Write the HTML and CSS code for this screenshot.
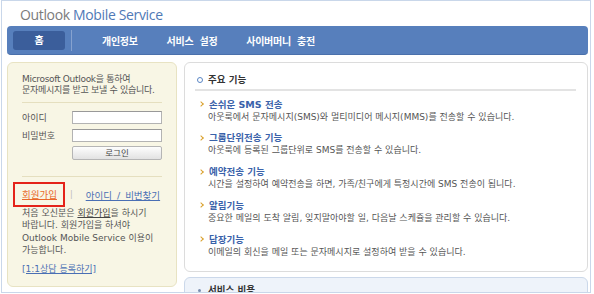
FILE: index.html
```html
<!DOCTYPE html>
<html lang="ko">
<head>
    <meta charset="UTF-8">
    <title>Outlook Mobile Service</title>
    <link rel="stylesheet" href="styles.css">
</head>
<body>
    <div class="frame">
        <div class="header">
            <span class="logo-gray">Outlook</span> <span class="logo-blue">Mobile Service</span>
        </div>

        <nav class="gnb">
            <a class="gnb-home">홈</a>
            <span class="gnb-sep"></span>
            <ul class="gnb-menu">
                <li>개인정보</li>
                <li>서비스 설정</li>
                <li>사이버머니 충전</li>
            </ul>
        </nav>

        <div class="content">
            <div class="login-box">
                <p class="login-intro">Microsoft Outlook을 통하여<br>문자메시지를 받고 보낼 수 있습니다.</p>

                <div class="login-form">
                    <div class="form-row">
                        <label>아이디</label>
                        <input type="text">
                    </div>
                    <div class="form-row">
                        <label>비밀번호</label>
                        <input type="password">
                    </div>
                    <div class="form-row">
                        <label></label>
                        <button class="login-btn">로그인</button>
                    </div>
                </div>

                <div class="login-links">
                    <span class="join-box"><a class="join-link">회원가입</a></span>
                    <span class="bar">|</span>
                    <a class="find-link">아이디 / 비번찾기</a>
                </div>

                <p class="login-note">처음 오신분은 <u>회원가입</u>을 하시기<br>바랍니다. 회원가입을 하셔야<br>Outlook Mobile Service 이용이<br>가능합니다.</p>

                <a class="qna-link">[1:1상담 등록하기]</a>
            </div>

            <div class="main-col">
                <div class="feature-box">
                    <h2 class="box-title">주요 기능</h2>
                    <ul class="feature-list">
                        <li>
                            <h3>손쉬운 SMS 전송</h3>
                            <p>아웃룩에서 문자메시지(SMS)와 멀티미디어 메시지(MMS)를 전송할 수 있습니다.</p>
                        </li>
                        <li>
                            <h3>그룹단위전송 기능</h3>
                            <p>아웃룩에 등록된 그룹단위로 SMS를 전송할 수 있습니다.</p>
                        </li>
                        <li>
                            <h3>예약전송 기능</h3>
                            <p>시간을 설정하여 예약전송을 하면, 가족/친구에게 특정시간에 SMS 전송이 됩니다.</p>
                        </li>
                        <li>
                            <h3>알림기능</h3>
                            <p>중요한 메일의 도착 알림, 잊지말아야할 일, 다음날 스케쥴을 관리할 수 있습니다.</p>
                        </li>
                        <li>
                            <h3>답장기능</h3>
                            <p>이메일의 회신을 메일 또는 문자메시지로 설정하여 받을 수 있습니다.</p>
                        </li>
                    </ul>
                </div>

                <div class="price-box">
                    <h2 class="price-title">서비스 비용</h2>
                </div>
            </div>
        </div>
    </div>
</body>
</html>
```

FILE: styles.css
```css
body {
margin: 0;
background-color: white;
font-family: "DejaVu Sans", "Noto Sans CJK KR", sans-serif;
color: #555;
}

.frame {
margin-left: 1px;
width: 590px;
height: 293px;
box-sizing: border-box;
border: 1px solid #c9d7ea;
padding: 0 2px 0 5px;
overflow: hidden; /* o quadro corta a caixa de baixo */
}

.header {
height: 23px;
padding: 2px 0 0 13px;
font-family: "Open Sans", sans-serif;
font-size: 14px;
line-height: 23px;
letter-spacing: -0.35px;
}

.logo-gray {
color: #7b7b7b;
}

.logo-blue {
color: #4f79b6;
}

/* menu azul */
.gnb {
display: flex;
align-items: center;
height: 29px;
box-sizing: border-box;
padding-left: 6px;
background-color: #577fbc;
border-bottom: 1px solid #4a70ab;
border-radius: 4px;
}

.gnb-home {
width: 52px;
height: 19px;
line-height: 19px;
text-align: center;
background-color: #3b5e9b;
border-radius: 3px;
color: white;
font-size: 10px;
font-weight: bold;
}

.gnb-sep {
width: 1px;
height: 21px;
margin-left: 6px;
background-color: #86a2cf;
}

.gnb-menu {
display: flex;
gap: 29px;
margin: 0 0 0 30px;
padding: 0;
list-style: none;
color: white;
font-size: 10px;
font-weight: bold;
letter-spacing: -0.3px;
word-spacing: 3px;
}

.content {
display: flex;
gap: 7px;
margin-top: 7px;
}

/* caixa de login */
.login-box {
width: 170px;
height: 225px;
flex-shrink: 0;
box-sizing: border-box;
padding: 11px 14px 0 14px;
background-color: #f8f6e5;
border: 1px solid #e8e3c3;
border-radius: 6px;
}

.login-intro {
margin: 0;
padding-bottom: 6px;
border-bottom: 1px solid #e5dfbf;
font-size: 9px;
line-height: 11px;
letter-spacing: -0.3px;
color: #555;
}

.login-form {
margin-top: 8px;
padding-bottom: 16px;
border-bottom: 1px solid #e5dfbf;
}

.form-row {
display: flex;
align-items: center;
height: 13px;
margin-bottom: 4.5px;
font-size: 9px;
color: #555;
}

.form-row:last-child {
height: 14px;
margin-bottom: 0;
}

.form-row label {
width: 50px;
}

.form-row input {
width: 90px;
height: 13px;
box-sizing: border-box;
margin: 0;
padding: 0;
border: 1px solid #b3b3b3;
border-top-color: #999;
background-color: white;
}

.login-btn {
width: 90px;
height: 14px;
box-sizing: border-box;
margin: 0;
padding: 0;
border: 1px solid #b5b5b5;
border-radius: 2px;
background: linear-gradient(#fdfdfd, #e2e2e2);
font-family: "DejaVu Sans", "Noto Sans CJK KR", sans-serif;
font-size: 8.5px;
line-height: 12px;
color: #444;
}

.login-links {
display: flex;
align-items: center;
margin-top: 5px;
font-size: 9.5px;
}

.join-box {
height: 25px;
box-sizing: border-box;
margin-left: -9px;
padding: 0 6px 0 7px;
border: 2px solid #e4231a;
line-height: 21px;
}

.join-link {
color: #e8692b;
text-decoration: underline;
}

.bar {
margin-left: 5px;
color: #bbb;
font-size: 8px;
}

.find-link {
margin-left: 13px;
color: #4a6fb4;
text-decoration: underline;
word-spacing: 2px;
}

.login-note {
margin: 0;
font-size: 9px;
line-height: 12.4px;
color: #555;
}

.login-note u {
color: #444;
}

.qna-link {
display: block;
margin-top: 6px;
font-size: 9px;
line-height: 12.4px;
color: #4a6fb4;
text-decoration: underline;
}

/* coluna da direita */
.main-col {
flex: 1;
}

.feature-box {
height: 210px;
box-sizing: border-box;
padding: 11px 11px 0 10px;
background-color: white;
border: 1px solid #dcdcdc;
border-radius: 6px;
}

.box-title {
display: flex;
align-items: center;
gap: 5px;
margin: 0;
padding: 0 0 3px 2px;
border-bottom: 2px solid #e3e3e3;
font-size: 9.5px;
line-height: 12px;
color: #333;
}

.box-title::before {
content: "";
width: 6px;
height: 6px;
box-sizing: border-box;
border: 1.5px solid #5a86c5;
border-radius: 50%;
}

.feature-list {
margin: 6.5px 0 0 0;
padding: 0 0 0 13px;
list-style: none;
}

.feature-list li {
margin-bottom: 7.75px;
}

.feature-list h3 {
display: flex;
align-items: center;
margin: 0 0 0 -9px;
font-size: 9.5px;
line-height: 13px;
color: #3a62aa;
}

.feature-list h3::before {
content: "";
width: 3px;
height: 3px;
margin: 0 6px 0 0;
border-top: 1.5px solid #d9a02b;
border-right: 1.5px solid #d9a02b;
transform: rotate(45deg);
}

.feature-list p {
margin: 0;
font-size: 9px;
line-height: 13px;
color: #555;
}

.price-box {
height: 40px;
box-sizing: border-box;
margin-top: 5px;
padding: 6px 0 0 13px;
background-color: #eef3fa;
border: 1px solid #cbd8ea;
border-radius: 6px;
}

.price-title {
display: flex;
align-items: center;
gap: 7px;
margin: 0;
font-size: 9.5px;
line-height: 12px;
color: #333;
}

.price-title::before {
content: "";
width: 3px;
height: 3px;
background-color: #7a8fb0;
border-radius: 50%;
}
```
